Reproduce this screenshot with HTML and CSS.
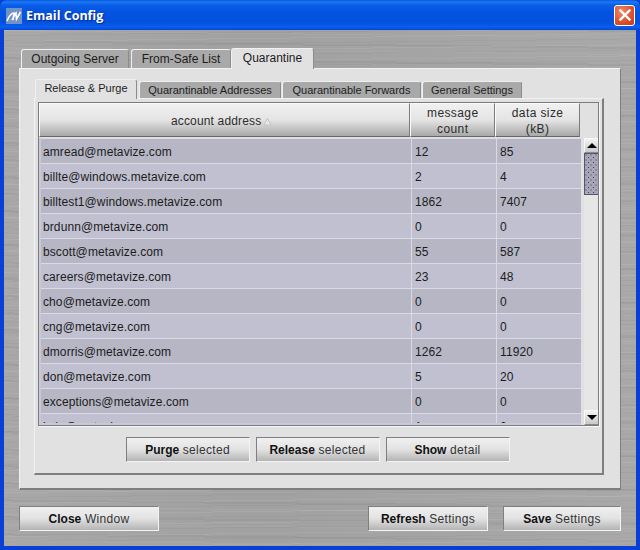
FILE: index.html
```html
<!DOCTYPE html>
<html lang="en">
<head>
<meta charset="utf-8">
<title>Email Config</title>
<link rel="stylesheet" href="styles.css">
</head>
<body>
<div class="window">
  <header class="titlebar">
    <span class="logo">
      <svg width="16" height="16" viewBox="0 0 16 16"><rect width="16" height="16" fill="#6f93c8"/><path d="M1 13 C3 8 5 5 8 5 L7 12 M6 12 C8 9 9 6 10 5 L10.500 11 L14.500 4" fill="none" stroke="#fff" stroke-width="1.600"/></svg>
    </span>
    <span class="title">Email Config</span>
    <span class="close">
      <svg width="12" height="12" viewBox="0 0 12 12"><path d="M1.500 1.500 L10.500 10.500 M10.500 1.500 L1.500 10.500" stroke="#fff" stroke-width="2.400" stroke-linecap="square"/></svg>
    </span>
  </header>
  <main class="client">
    <div class="tabs outer-tabs">
      <span class="tab outer-tab tab-first">Outgoing Server</span>
      <span class="tab outer-tab tab-second">From-Safe List</span>
      <span class="tab outer-tab tab-active tab-third">Quarantine</span>
    </div>
    <section class="panel outer-panel">
      <div class="tabs inner-tabs">
        <span class="tab inner-tab tab-active tab-release">Release &amp; Purge</span>
        <span class="tab inner-tab tab-addr">Quarantinable Addresses</span>
        <span class="tab inner-tab tab-fwd">Quarantinable Forwards</span>
        <span class="tab inner-tab tab-gen">General Settings</span>
      </div>
      <section class="panel inner-panel">
        <div class="table-box">
          <div class="head">
            <div class="hcell col-addr">account address<svg class="sort" width="9" height="9" viewBox="0 0 9 9"><path d="M4.500 1.500 L8 8 L1 8 Z" fill="#e8e8e8" stroke="#c4c4c4"/></svg></div>
            <div class="hcell col-count">message<br>count</div>
            <div class="hcell col-size">data size<br>(kB)</div>
          </div>
          <div class="body">
            <div class="rows">
              <div class="row"><span class="cell col-addr">amread@metavize.com</span><span class="cell col-count">12</span><span class="cell col-size">85</span></div>
              <div class="row"><span class="cell col-addr">billte@windows.metavize.com</span><span class="cell col-count">2</span><span class="cell col-size">4</span></div>
              <div class="row"><span class="cell col-addr">billtest1@windows.metavize.com</span><span class="cell col-count">1862</span><span class="cell col-size">7407</span></div>
              <div class="row"><span class="cell col-addr">brdunn@metavize.com</span><span class="cell col-count">0</span><span class="cell col-size">0</span></div>
              <div class="row"><span class="cell col-addr">bscott@metavize.com</span><span class="cell col-count">55</span><span class="cell col-size">587</span></div>
              <div class="row"><span class="cell col-addr">careers@metavize.com</span><span class="cell col-count">23</span><span class="cell col-size">48</span></div>
              <div class="row"><span class="cell col-addr">cho@metavize.com</span><span class="cell col-count">0</span><span class="cell col-size">0</span></div>
              <div class="row"><span class="cell col-addr">cng@metavize.com</span><span class="cell col-count">0</span><span class="cell col-size">0</span></div>
              <div class="row"><span class="cell col-addr">dmorris@metavize.com</span><span class="cell col-count">1262</span><span class="cell col-size">11920</span></div>
              <div class="row"><span class="cell col-addr">don@metavize.com</span><span class="cell col-count">5</span><span class="cell col-size">20</span></div>
              <div class="row"><span class="cell col-addr">exceptions@metavize.com</span><span class="cell col-count">0</span><span class="cell col-size">0</span></div>
              <div class="row"><span class="cell col-addr">kyle@metavize.com</span><span class="cell col-count">1</span><span class="cell col-size">0</span></div>
            </div>
            <div class="scrollbar">
              <span class="arrow-btn"><span class="arrow-up"></span></span>
              <span class="thumb"></span>
              <span class="track"></span>
              <span class="arrow-btn"><span class="arrow-down"></span></span>
            </div>
          </div>
        </div>
        <div class="actions">
          <button class="btn btn-action"><b>Purge</b> selected</button>
          <button class="btn btn-action"><b>Release</b> selected</button>
          <button class="btn btn-action"><b>Show</b> detail</button>
        </div>
      </section>
    </section>
    <footer class="footer">
      <button class="btn btn-close"><b>Close</b> Window</button>
      <span class="spacer"></span>
      <button class="btn btn-refresh"><b>Refresh</b> Settings</button>
      <button class="btn btn-save"><b>Save</b> Settings</button>
    </footer>
  </main>
</div>
</body>
</html>
```
FILE: styles.css
```css
* { box-sizing: border-box; }
html, body { margin: 0; padding: 0; }
body { width: 640px; height: 550px; overflow: hidden; font-family: "Liberation Sans", Arial, sans-serif; font-size: 12px; color: #1c1c1c; }

.window { width: 640px; height: 550px; display: flex; flex-direction: column; background: #0a3fd6; }

.titlebar { height: 30px; flex: none; display: flex; align-items: center; padding: 0 5px 0 6px; border-radius: 7px 7px 0 0;
  background: linear-gradient(#0a5ae0 0, #1c78f4 2px, #0a5fe8 5px, #0453e0 12px, #0350dc 22px, #0a5ef0 27px, #0348d0 30px); }
.logo { width: 16px; height: 16px; display: block; margin-top: 1px; }
.logo svg { display: block; }
.title { margin-left: 4px; font-family: "Open Sans", sans-serif; font-weight: 700; font-size: 12.5px; color: #fff; text-shadow: 1px 1px 1px #0a2a90; }
.close { margin-left: auto; width: 21px; height: 21px; display: flex; align-items: center; justify-content: center; border: 1px solid #fff; border-radius: 3px; background: radial-gradient(circle at 35% 30%, #ee8a6c, #dc4f2a 60%, #c23a16); }
.close svg { display: block; }

.client { flex: 1; margin: 0 4px 4px 4px; padding: 17px 15px 15px 15px; display: flex; flex-direction: column;
  background-color: #a4a4a4;
  background-image:
    repeating-linear-gradient(179.3deg, rgba(255,255,255,.07) 0 1px, transparent 1px 5px, rgba(0,0,0,.03) 5px 6px, transparent 6px 11px),
    repeating-linear-gradient(180.6deg, rgba(0,0,0,.04) 0 2px, transparent 2px 7px, rgba(255,255,255,.05) 7px 8px, transparent 8px 17px),
    linear-gradient(90deg, rgba(255,255,255,.04), rgba(0,0,0,.02) 40%, rgba(255,255,255,.05)); }

.tabs { display: flex; align-items: flex-end; flex: none; }
.tab { display: flex; align-items: center; justify-content: center; background: #a9a9a9; border: 1px solid #f0f0f0; border-bottom: none; border-right-color: #8c8c8c; border-radius: 3px 3px 0 0; white-space: nowrap; }
.tab-active { background: #e1e1e1; position: relative; z-index: 1; }

.outer-tabs { height: 21px; padding-left: 2px; }
.outer-tab { height: 19px; }
.outer-tab.tab-active { height: 21px; margin-bottom: -1px; padding-bottom: 3px; }
.tab-first { width: 108px; margin-right: 2px; }
.tab-second { width: 100px; }
.tab-third { width: 83px; }

.panel { background: #e1e1e1; }
.outer-panel { height: 422px; padding: 10px 16px 15px 14px; border: 1px solid #f2f2f2; border-right-color: #7e7e7e; border-bottom: 2px solid #7e7e7e; flex: none; }

.inner-tabs { height: 19px; padding-left: 1px; }
.inner-tab { height: 17px; font-size: 11px; }
.inner-tab.tab-active { height: 20px; margin-bottom: -1px; padding-bottom: 3px; }
.tab-release { width: 102px; margin-right: 2px; }
.tab-addr { width: 142px; margin-right: 1px; }
.tab-fwd { width: 139px; margin-right: 1px; }
.tab-gen { width: 100px; }

.inner-panel { height: 377px; padding: 3px 3px 0 3px; border: 1px solid #f2f2f2; border-right: 2px solid #7e7e7e; border-bottom: 2px solid #7e7e7e; }

.table-box { height: 324px; border: 1px solid #7c7c7c; box-shadow: 1px 1px 0 #f6f6f6; overflow: hidden; background: #e1e1e1; }

.head { height: 34px; display: flex; padding-right: 18px; }
.hcell { display: flex; align-items: center; justify-content: center; text-align: center; padding-top: 2px; line-height: 16px; color: #2c2c2c; background: linear-gradient(#f0f0f0 0, #e4e4e4 50%, #a8a8a8 100%); border-right: 1px solid #7c7c7c; border-left: 1px solid #fafafa; border-bottom: 1px solid #666; border-top: 1px solid #fafafa; }
.hcell.col-addr { width: 372px; padding-right: 6px; letter-spacing: .15px; }
.hcell.col-count { width: 85px; letter-spacing: .4px; }
.hcell.col-size { width: 85px; letter-spacing: .4px; }
.sort { margin-left: 2px; }

.body { display: flex; margin-top: 1px; height: 287px; }
.rows { width: 542px; flex: none; overflow: hidden; background: #dadae6; border-left: 2px solid #c8c8d8; border-bottom: 2px solid #c8c8d8; }
.row { height: 25px; display: flex; background: #b6b6c4; border-top: 1px solid #dadae6; }
.row:nth-child(even) { background: #c0c0d0; }
.cell { display: flex; align-items: center; padding: 1px 0 0 3px; letter-spacing: .1px; font-size: 12px; }
.cell.col-addr { width: 370px; padding-left: 2px; }
.cell.col-count { width: 85px; border-left: 1px solid #dadae6; }
.cell.col-size { width: 85px; border-left: 1px solid #dadae6; }

.scrollbar { width: 15px; margin-left: 3px; display: flex; flex-direction: column; flex: none; }
.arrow-btn { height: 15px; flex: none; display: flex; align-items: center; justify-content: center; background: linear-gradient(#f4f4f4, #c8c8c8); border: 1px solid #f8f8f8; border-bottom-color: #8a8a8a; }
.arrow-up { width: 0; height: 0; border-left: 5px solid transparent; border-right: 5px solid transparent; border-bottom: 5px solid #000; }
.arrow-down { width: 0; height: 0; border-left: 5px solid transparent; border-right: 5px solid transparent; border-top: 5px solid #000; }
.thumb { height: 42px; flex: none; border-top: 1px solid #55556a; border-bottom: 1px solid #55556a; border-left: 1px solid #55556a; background-color: #a6a6b8; background-image: radial-gradient(#3c3c4a 0.7px, transparent 1px), radial-gradient(#3c3c4a 0.7px, transparent 1px); background-size: 5px 5px; background-position: 1px 1px, 3.500px 3.500px; }
.track { flex: 1; background: #e6e6e6; }

.actions { display: flex; justify-content: center; gap: 6px; margin-top: 11px; padding-right: 2px; }
.btn { height: 25px; padding: 1px 0 0; font: 12px "Liberation Sans", Arial, sans-serif; letter-spacing: .3px; color: #333; cursor: default; background: linear-gradient(#f0f0f0 0, #e2e2e2 50%, #b4b4b4 100%); border: 1px solid; border-color: #7f7f7f #f4f4f4 #f4f4f4 #7f7f7f; }
.btn b { letter-spacing: 0; color: #111; }
.btn-action { width: 124px; }

.footer { display: flex; margin-top: 16px; height: 25px; flex: none; }
.spacer { flex: 1; }
.btn-close { width: 140px; }
.btn-refresh { width: 120px; margin-right: 15px; }
.btn-save { width: 118px; }
```
